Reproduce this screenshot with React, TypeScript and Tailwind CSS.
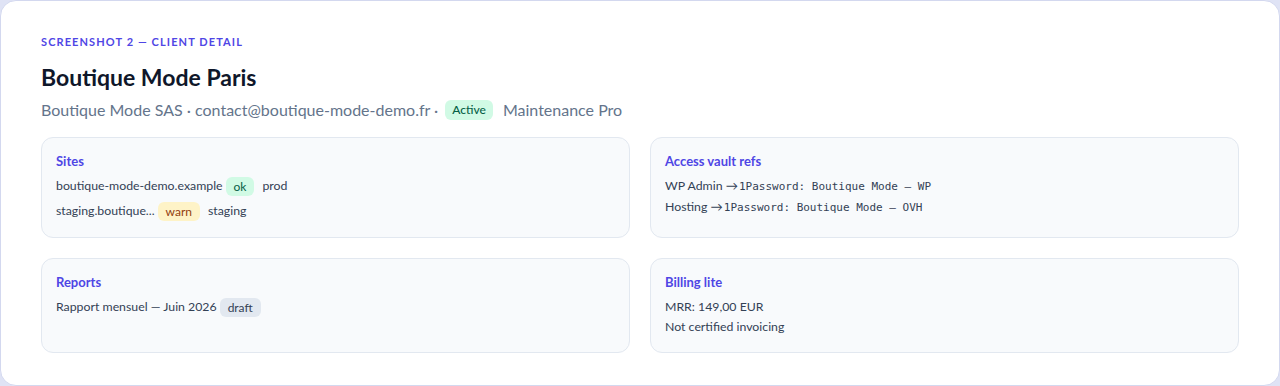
const sites = [
  { host: "boutique-mode-demo.example", status: "ok", env: "prod" },
  { host: "staging.boutique...", status: "warn", env: "staging" },
];

const vault = [
  { label: "WP Admin", ref: "1Password: Boutique Mode — WP" },
  { label: "Hosting", ref: "1Password: Boutique Mode — OVH" },
];

const badgeTone: Record<string, string> = {
  ok: "bg-[#d1fae5] text-[#065f46]",
  warn: "bg-[#fef3c7] text-[#92400e]",
  draft: "bg-[#e2e8f0] text-[#334155]",
};

function Card({ title, children }: { title: string; children: React.ReactNode }) {
  return (
    <div className="rounded-xl border border-[#e2e8f0] bg-[#f8fafc] px-[14px] pt-[14px] pb-[15px]">
      <h3 className="mb-[6px] text-[13px] font-bold leading-[18px] text-[#4f46e5]">{title}</h3>
      {children}
    </div>
  );
}

export default function App() {
  return (
    <div className="min-h-screen bg-[#dfe3f5] font-['Lato','Noto_Sans',sans-serif]">
      <div className="h-[386px] rounded-2xl border border-[#d3d8ef] bg-white px-10 pt-[33px]">
        {/* Header */}
        <div className="text-[11px] font-bold uppercase leading-4 tracking-[0.1em] text-[#4f46e5]">
          Screenshot 2 — Client detail
        </div>
        <h1 className="mt-[13px] text-[23px] font-bold leading-7 text-[#0f172a]">Boutique Mode Paris</h1>
        <div className="mt-[7px] flex items-center text-[16px] leading-6 text-[#64748b]">
          <span>Boutique Mode SAS · contact@boutique-mode-demo.fr ·</span>
          <span className="ml-[7px] rounded-md bg-[#d1fae5] px-[7px] text-[12px] font-medium leading-5 text-[#065f46]">
            Active
          </span>
          <span className="ml-[10px]">Maintenance Pro</span>
        </div>

        {/* Cards */}
        <div className="mt-[15px] grid grid-cols-2 gap-5">
          <Card title="Sites">
            <div className="flex flex-col gap-1">
              {sites.map((s) => (
                <div key={s.host} className="flex h-[21px] items-center text-[12.3px] text-[#334155]">
                  <span>{s.host}</span>
                  <span className={`ml-[3px] rounded-md px-2 text-[12px] leading-[19px] ${badgeTone[s.status]}`}>
                    {s.status}
                  </span>
                  <span className="ml-2">{s.env}</span>
                </div>
              ))}
            </div>
          </Card>
          <Card title="Access vault refs">
            <div className="text-[12.3px] leading-5 text-[#334155]">
              {vault.map((v) => (
                <div key={v.label} className="flex items-baseline">
                  <span>{v.label} →</span>
                  <span className="ml-px font-['DejaVu_Sans_Mono',monospace] text-[11px]">{v.ref}</span>
                </div>
              ))}
            </div>
          </Card>
          <Card title="Reports">
            <div className="flex h-[21px] items-center text-[12.3px] text-[#334155]">
              <span>Rapport mensuel — Juin 2026</span>
              <span className={`ml-[3px] rounded-md px-2 text-[12px] leading-[19px] ${badgeTone.draft}`}>draft</span>
            </div>
          </Card>
          <Card title="Billing lite">
            <div className="text-[12.3px] leading-5 text-[#334155]">
              <div>MRR: 149,00 EUR</div>
              <div>Not certified invoicing</div>
            </div>
          </Card>
        </div>
      </div>
    </div>
  );
}
